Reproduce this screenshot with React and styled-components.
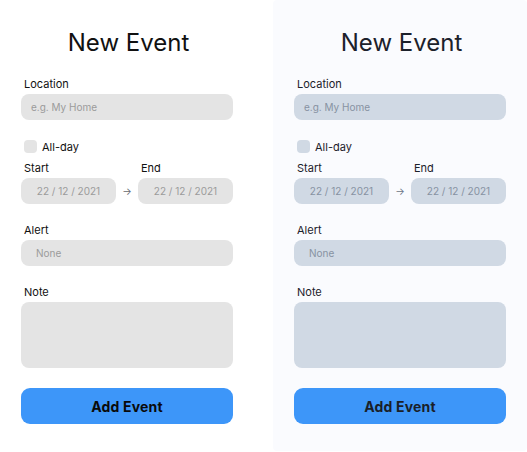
import React from "react";
import styled, { createGlobalStyle } from "styled-components";

const Global = createGlobalStyle`
  html, body { margin: 0; padding: 0; background: #ffffff; }
  body { font-family: Inter, "Noto Sans", sans-serif; }
  * { box-sizing: border-box; }
`;

const themes = {
  plain: {
    bg: "#ffffff",
    field: "#e4e4e4",
    text: "#111111",
    placeholder: "#9b9b9b",
    arrow: "#666a70",
    button: "#3d96f9",
    buttonText: "#0a0a0a",
  },
  slate: {
    bg: "#fafbfe",
    field: "#d0d9e4",
    text: "#1c212b",
    placeholder: "#8792a2",
    arrow: "#6b7585",
    button: "#3d96f9",
    buttonText: "#1a1f29",
  },
};

const Page = styled.div`
  display: flex;
  gap: 19px;
  width: 527px;
`;

const Panel = styled.form`
  width: 254px;
  height: 451px;
  padding: 28px 21px 0;
  background: ${(p) => p.$t.bg};
  border-radius: 4px;
  color: ${(p) => p.$t.text};
  display: flex;
  flex-direction: column;
`;

const Title = styled.h1`
  margin: 0 0 19px;
  font-size: 24px;
  line-height: 30px;
  font-weight: 400;
  text-align: center;
  letter-spacing: 0;
  padding-left: 3px;
`;

const Group = styled.div`
  display: flex;
  flex-direction: column;
  gap: 3px;
  margin-bottom: ${(p) => p.$mb ?? 19}px;
`;

const Label = styled.label`
  font-size: 11px;
  line-height: 14px;
  padding-left: 3px;
`;

const Field = styled.div`
  height: ${(p) => p.$h ?? 26}px;
  border-radius: 8px;
  background: ${(p) => p.$t.field};
  color: ${(p) => p.$t.placeholder};
  font-size: 10px;
  display: flex;
  align-items: center;
  justify-content: ${(p) => (p.$center ? "center" : "flex-start")};
  padding-left: ${(p) => (p.$center ? 0 : p.$pl ?? 10)}px;
`;

const CheckRow = styled.div`
  display: flex;
  align-items: center;
  gap: 5px;
  padding-left: 3px;
  height: 13px;
  margin-bottom: 8px;
  font-size: 11px;
`;

const Box = styled.span`
  width: 13px;
  height: 13px;
  border-radius: 4px;
  background: ${(p) => p.$t.field};
`;

const DateRow = styled.div`
  display: flex;
  align-items: flex-end;
  justify-content: space-between;
  margin-bottom: 19px;
`;

const DateCol = styled.div`
  width: 95px;
  display: flex;
  flex-direction: column;
  gap: 3px;
`;

const Arrow = styled.span`
  width: 22px;
  height: 26px;
  display: flex;
  align-items: center;
  justify-content: center;
  color: ${(p) => p.$t.arrow};
  font-size: 10px;
`;

const Button = styled.button`
  height: 36px;
  border: none;
  border-radius: 9px;
  background: ${(p) => p.$t.button};
  color: ${(p) => p.$t.buttonText};
  font-family: Inter, "Noto Sans", sans-serif;
  font-size: 14px;
  font-weight: 700;
  letter-spacing: 0.2px;
`;

function EventForm({ t }) {
  return (
    <Panel $t={t} onSubmit={(e) => e.preventDefault()}>
      <Title>New Event</Title>
      <Group $mb={20}>
        <Label>Location</Label>
        <Field $t={t} $pl={10}>e.g. My Home</Field>
      </Group>
      <CheckRow>
        <Box $t={t} />
        <span>All-day</span>
      </CheckRow>
      <DateRow>
        <DateCol>
          <Label>Start</Label>
          <Field $t={t} $center>22 / 12 / 2021</Field>
        </DateCol>
        <Arrow $t={t}>→</Arrow>
        <DateCol>
          <Label>End</Label>
          <Field $t={t} $center>22 / 12 / 2021</Field>
        </DateCol>
      </DateRow>
      <Group>
        <Label>Alert</Label>
        <Field $t={t} $pl={15}>None</Field>
      </Group>
      <Group $mb={20}>
        <Label>Note</Label>
        <Field $t={t} $h={66} />
      </Group>
      <Button $t={t} type="submit">Add Event</Button>
    </Panel>
  );
}

export default function App() {
  return (
    <>
      <Global />
      <Page>
        <EventForm t={themes.plain} />
        <EventForm t={themes.slate} />
      </Page>
    </>
  );
}
